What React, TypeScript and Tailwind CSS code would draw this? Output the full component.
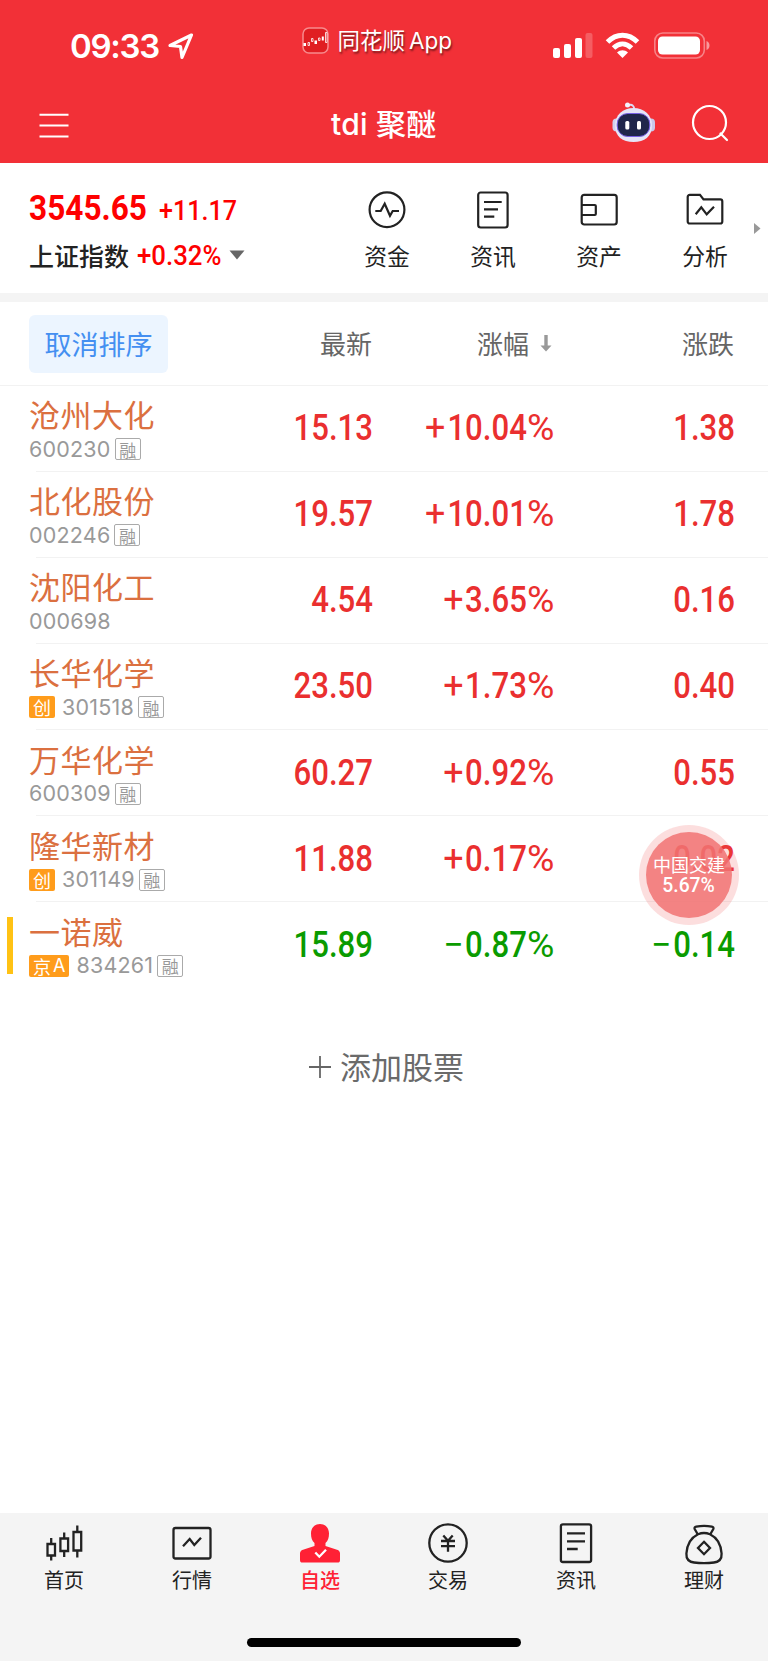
import React from 'react';

interface Stock {
  name: string;
  code: string;
  board?: string;
  margin?: boolean;
  price: string;
  percent: string;
  change: string;
  marked?: boolean;
}

const STOCKS: Stock[] = [
  { name: '沧州大化', code: '600230', margin: true, price: '15.13', percent: '+10.04', change: '1.38' },
  { name: '北化股份', code: '002246', margin: true, price: '19.57', percent: '+10.01', change: '1.78' },
  { name: '沈阳化工', code: '000698', price: '4.54', percent: '+3.65', change: '0.16' },
  { name: '长华化学', code: '301518', board: '创', margin: true, price: '23.50', percent: '+1.73', change: '0.40' },
  { name: '万华化学', code: '600309', margin: true, price: '60.27', percent: '+0.92', change: '0.55' },
  { name: '隆华新材', code: '301149', board: '创', margin: true, price: '11.88', percent: '+0.17', change: '0.02' },
  { name: '一诺威', code: '834261', board: '京A', margin: true, price: '15.89', percent: '−0.87', change: '−0.14', marked: true },
];

const SHORTCUTS = [
  {
    label: '资金',
    icon: <><circle cx="20" cy="19.7" r="17.4" /><path d="M8.3 21h5.4l4-7.3L23 25.7l2.7-4.7H32" /></>,
  },
  {
    label: '资讯',
    icon: <><rect x="5.2" y="2.5" width="29.4" height="35" rx="2.5" /><path d="M11 12h17.7M11 19.3h14M11 26.7h10.3" /></>,
  },
  {
    label: '资产',
    icon: <><rect x="2.7" y="4.9" width="35" height="29.6" rx="2.5" /><path d="M2.7 15h13.1a1 1 0 0 1 1 1v8a1 1 0 0 1-1 1H2.7" /></>,
  },
  {
    label: '分析',
    icon: <><path d="M4.7 4.9H15l3.5 4.5h16.8a2 2 0 0 1 2 2v20.1a2 2 0 0 1-2 2H4.7a2 2 0 0 1-2-2V6.9a2 2 0 0 1 2-2z" /><path d="M10.7 24.3l5.6-7 5.4 7 7.3-7.6" /></>,
  },
];

const TABS = [
  {
    label: '首页',
    icon: (
      <path d="M7.5 26H15v11.5H7.500zM11.200 20v6M11.200 37.500v5M20.400 20.500h7.700v12.500h-7.700zM24.200 14.500v6M24.200 33v6M33.500 14h7.700v18.500h-7.700zM37.300 7.500V14M37.300 32.500v7" />
    ),
  },
  {
    label: '行情',
    icon: <><rect x="5.5" y="10" width="37" height="30.5" rx="2" /><path d="M15 28.300l6.700-7.300 4.600 6 6.700-7.300" /></>,
  },
  {
    label: '自选',
    active: true,
    icon: (
      <>
        <path
          d="M24 6c5.500 0 9 4 9 9.500 0 4-1 7.500-3.500 9.500v3l11.500 3.700c2 .700 3 1.800 3 3.800V42c0 1.800-.800 2.600-2.500 2.600h-35C4.800 44.600 4 43.800 4 42v-6.500c0-2 1-3.100 3-3.800L18.500 28v-3C16 23 15 19.500 15 15.500 15 10 18.500 6 24 6z"
          fill="currentColor"
          stroke="none"
        />
        <path d="M19.300 34.500l4 4.200 6.700-7" stroke="#fff" />
      </>
    ),
  },
  {
    label: '交易',
    icon: <><circle cx="24" cy="25" r="18.7" /><path d="M19.300 17.500l4.700 5.200 4.700-5.200M17 23h14M17 28.200h14M24 22.700v11" /></>,
  },
  {
    label: '资讯',
    icon: <><rect x="8.9" y="6.3" width="30.2" height="37.7" rx="2" /><path d="M15 15.300h18M15 23.300h18M15 31h10.700" /></>,
  },
  {
    label: '理财',
    icon: (
      <>
        <path d="M17.700 16.200l-3-5.200c-.500-1.300.100-2 1.500-2.300 5.200-1 10.600-1 15.600 0 1.400.300 2 1 1.500 2.300l-3 5.200" />
        <path d="M18 16.300c4-1.700 8-1.700 12 0 6.500 3.200 11 10 11.600 19.200.300 5.500-2.600 8.400-7.600 9-6.500.800-13.500.800-20 0-5-.600-7.900-3.500-7.600-9C7 26.300 11.500 19.500 18 16.300z" />
        <path d="M24 23.800l6 6.200-6 6.200-6-6.200z" />
      </>
    ),
  },
];

const StatusBar = () => (
  <div className="flex h-[84px] items-start pl-[70px]">
    <div className="mt-[26px] w-[92px] whitespace-nowrap font-['Inter'] text-[33px] font-semibold leading-[40px] tracking-[-1.3px]">09:33</div>
    <svg className="ml-[5px] mt-[32px] h-[28px] w-[28px]" viewBox="0 0 28 28" fill="none" stroke="currentColor" strokeWidth="3.2" strokeLinejoin="round">
      <path d="M24.5 3L3 13.5l10.5 1L15 25.5z" />
    </svg>
    <svg className="ml-[107px] mt-[27px] h-[27px] w-[27px]" viewBox="0 0 27 27" fill="none">
      <rect x="1" y="1" width="25" height="25" rx="6" fill="#e01e22" stroke="#f78a8d" strokeWidth="1.5" />
      <path d="M1.5 16H4v3H1.500zM12.500 13.500H15v3.500h-2.500zM19.800 9.500h2v4h-2z" fill="#fff" />
      <path d="M6 15.500h1.500v3H6zM9.500 11.500H11v3H9.500zM16.500 11H18v2.500h-1.500zM23.500 5.500H25v10h-1.500z" stroke="#fff" strokeWidth=".8" />
    </svg>
    <div className="ml-[8.5px] mt-[26px] w-[118px] whitespace-nowrap font-['Inter','Noto_Sans_CJK_SC',sans-serif] text-[22.5px] leading-[30px] [text-shadow:1px_2px_2px_rgba(0,0,0,.5)]">
      同花顺<span className="ml-[4px]">App</span>
    </div>
    <svg className="ml-[97.5px] mt-[32px] h-[27px] w-[158px]" viewBox="0 0 158 27" fill="currentColor">
      <rect x="0" y="16" width="7" height="10" rx="2" />
      <rect x="11" y="12" width="7" height="14" rx="2" />
      <rect x="22" y="6" width="7" height="20" rx="2" />
      <rect x="32.5" y="1" width="7" height="25" rx="2" opacity=".22" />
      <g fill="none" stroke="currentColor" strokeWidth="5">
        <path d="M54.5 10c9-9 21-9 30 0" />
        <path d="M60.5 16c5.500-5.300 12.500-5.300 18 0" />
      </g>
      <path d="M64 20.500c3.500-3 7.500-3 11 0L69.500 26z" />
      <rect x="101.8" y="1" width="49.5" height="25" rx="8" fill="none" stroke="currentColor" strokeWidth="1.6" opacity=".4" />
      <rect x="105" y="4.500" width="42" height="18" rx="4.500" />
      <path d="M153.500 9c4 1.500 4 7.500 0 9z" opacity=".5" />
    </svg>
  </div>
);

const Robot = () => (
  <svg className="h-[42px] w-[45px]" viewBox="0 0 45 42" fill="none">
    <path d="M16 4.5c4-2 6.500.5 6 4" stroke="#dcdcf5" strokeWidth="1.8" />
    <circle cx="15.5" cy="4" r="2.5" fill="#f3f2fd" />
    <rect x=".5" y="17.5" width="8" height="13" rx="4" fill="#d2d1ee" />
    <rect x="35" y="17.5" width="8" height="13" rx="4" fill="#c9c8ea" />
    <path d="M21.5 7C32 7 40 13.500 40 24.500S32.500 41 21.500 41 3 35.500 3 24.500 11 7 21.500 7z" fill="#e6e5f8" />
    <rect x="5.2" y="12.5" width="32.6" height="23" rx="10.5" fill="#20264b" stroke="#7860e6" strokeWidth="1" />
    <rect x="13.3" y="20" width="4" height="8.5" rx="1.5" fill="#fff" />
    <rect x="25" y="20" width="4" height="8.5" rx="1.5" fill="#fff" />
  </svg>
);

const TitleBar = () => (
  <div className="flex h-[79px] items-start pl-[39px]">
    <svg className="mt-[29px] h-[26px] w-[30px]" viewBox="0 0 30 26" stroke="currentColor" strokeWidth="2">
      <path d="M.5 1.8h29M.5 12.6h29M.5 23.4h29" />
    </svg>
    <h1 className="ml-[262px] mt-[20px] w-[120px] whitespace-nowrap font-['Inter','Noto_Sans_CJK_SC',sans-serif] text-[30px] font-medium leading-[40px] tracking-[.25px]">tdi 聚醚</h1>
    <div className="ml-[161px] mt-[17px]"><Robot /></div>
    <svg className="ml-[34px] mt-[20px] h-[38px] w-[38px]" viewBox="0 0 38 38" fill="none" stroke="currentColor" strokeWidth="2.2">
      <circle cx="18.5" cy="18.5" r="16.5" />
      <path d="M29.5 29.5l6.5 6.5" strokeLinecap="round" />
    </svg>
  </div>
);

const IndexPanel = () => (
  <section className="flex h-[130px] pl-[29px]">
    <div className="w-[305px] pt-[25px] text-[#fe0000]">
      <div className="flex h-[40px] items-baseline font-['Roboto']">
        <span className="w-[130px] origin-left scale-x-[.89] text-[35.5px] font-bold leading-[40px]">3545.65</span>
        <span className="origin-left scale-x-[.93] text-[27px] font-medium leading-[40px]">+11.17</span>
      </div>
      <div className="mt-[7px] flex h-[40px] items-center">
        <span className="w-[108px] font-['Noto_Sans_CJK_SC',sans-serif] text-[25px] font-medium leading-[36px] text-[#222]">上证指数</span>
        <span className="w-[91.5px] origin-left scale-x-[.955] pt-px font-['Roboto'] text-[27px] font-medium leading-[36px]">+0.32%</span>
        <svg className="h-[10px] w-[16px]" viewBox="0 0 16 10" fill="#666"><path d="M.5.5h15L8 9.500z" /></svg>
      </div>
    </div>
    <div className="flex">
      {SHORTCUTS.map(item => (
        <div key={item.label} className="flex w-[106px] flex-col items-center pt-[27px]">
          <svg className="h-[40px] w-[40px] text-[#222]" viewBox="0 0 40 40" fill="none" stroke="currentColor" strokeWidth="2.2">
            {item.icon}
          </svg>
          <span className="mt-[10.5px] text-[22.8px] leading-[30px] text-[#222]">{item.label}</span>
        </div>
      ))}
    </div>
    <svg className="ml-[-4px] mt-[60px] h-[11px] w-[7px] shrink-0" viewBox="0 0 7 11" fill="#999"><path d="M0 0l6.500 5.500L0 11z" /></svg>
  </section>
);

const TableHead = () => (
  <div className="flex h-[83.5px] items-center border-b border-[#f2f2f2] pl-[29px] text-[26px] leading-[36px] text-[#666]">
    <div className="mt-px flex h-[58px] w-[139px] items-center justify-center rounded-md bg-[#ecf5ff] text-[27px] text-[#448ff1]">取消排序</div>
    <div className="w-[204px] text-right">最新</div>
    <div className="flex w-[180px] items-center justify-end">
      涨幅
      <svg className="ml-[11px] h-[17px] w-[12px]" viewBox="0 0 12 17" fill="#999"><path d="M4.3 0h3.400v10.500h3.800L6 16.500.500 10.500h3.800z" /></svg>
    </div>
    <div className="w-[182px] text-right">涨跌</div>
  </div>
);

// Tall narrow figures with a slightly wider sign and percent mark
const Figure = ({ value, percent }: { value: string; percent?: boolean }) => {
  const signed = /^[+−]/.test(value);
  return (
    <div className="w-[181px] origin-right scale-x-[.865] whitespace-nowrap text-right">
      {signed && <span className="mr-[2px] inline-block origin-right scale-x-[1.15] font-normal">{value[0]}</span>}
      {signed ? value.slice(1) : value}
      {percent && <span className="ml-[5px] inline-block origin-right scale-x-[1.2] font-normal">%</span>}
    </div>
  );
};

const StockRow = ({ stock, last }: { stock: Stock; last: boolean }) => {
  const color = stock.percent.startsWith('+') ? 'text-[#ea2f2f]' : 'text-[#0a9b00]';
  return (
    <div className="flex h-[86.17px]">
      <div className="w-[36px] shrink-0 pl-[7px] pt-[14.5px]">
        {stock.marked && <div className="h-[57.5px] w-[6px] bg-[#ffc214]" />}
      </div>
      <div className={`flex flex-1 ${last ? '' : 'border-b border-[#f2f2f2]'}`}>
        <div className="-ml-[7px] w-[163px]">
          <div className="mt-[10.5px] h-[36px] whitespace-nowrap text-[31px] leading-[36px] tracking-[.5px] text-[#db7040]">{stock.name}</div>
          <div className="mt-[5.5px] flex h-[23px] items-center">
            {stock.board && (
              <span className="mr-[7px] flex h-[22px] min-w-[26px] items-center justify-center rounded-[2px] bg-[#ff9c1b] px-[4px] text-[18px] leading-none text-white">
                {stock.board[0]}
                {stock.board[1] && <span className="ml-[2px] font-['Inter']">{stock.board[1]}</span>}
              </span>
            )}
            <span className="font-['Inter'] text-[21.5px] leading-[23px] tracking-[.2px] text-[#999]">{stock.code}</span>
            {stock.margin && (
              <span className="ml-[4px] flex h-[22px] w-[26px] items-center justify-center rounded-[2px] border border-[#aaa] text-[17px] leading-none text-[#999]">融</span>
            )}
          </div>
        </div>
        <div className={`flex flex-1 pt-[20.5px] font-['Roboto'] text-[36px] font-medium leading-[44px] ${color}`}>
          <Figure value={stock.price} />
          <Figure value={stock.percent} percent />
          <Figure value={stock.change} />
        </div>
      </div>
    </div>
  );
};

const TabBar = () => (
  <nav className="h-[148px] bg-[#f4f4f4]">
    <div className="flex pt-[5px]">
      {TABS.map((tab, i) => (
        <div key={i} className={`flex w-[128px] flex-col items-center ${tab.active ? 'font-medium text-[#ff2135]' : 'text-[#222]'}`}>
          <svg className="h-[48px] w-[48px]" viewBox="0 0 48 48" fill="none" stroke="currentColor" strokeWidth="2.3">
            {tab.icon}
          </svg>
          <span className="text-[20px] leading-[28px]">{tab.label}</span>
        </div>
      ))}
    </div>
    <div className="mx-auto mt-[44px] h-[9px] w-[274px] rounded-full bg-black" />
  </nav>
);

export default function App() {
  return (
    <div className="relative flex h-[1662px] w-[768px] flex-col overflow-hidden bg-white font-['Noto_Sans_CJK_SC',sans-serif]">
      <header className="h-[163px] bg-[#f23037] text-white">
        <StatusBar />
        <TitleBar />
      </header>
      <IndexPanel />
      <div className="h-[9px] bg-[#f4f4f4]" />
      <TableHead />
      <div>
        {STOCKS.map((stock, i) => (
          <StockRow key={stock.code} stock={stock} last={i === STOCKS.length - 1} />
        ))}
      </div>
      <div className="mt-[56px] flex h-[44px] items-center justify-center text-[31px] text-[#6a6a6a]">
        <svg className="ml-[5px] mr-[9px] h-[22px] w-[22px]" viewBox="0 0 22 22" stroke="#666" strokeWidth="1.8"><path d="M11 0v22M0 11h22" /></svg>
        添加股票
      </div>
      <div className="flex-1" />
      <TabBar />
      <div className="h-px" />

      {/* Floating quote bubble */}
      <div className="absolute left-[639px] top-[825px] flex h-[100px] w-[100px] items-center justify-center rounded-full bg-[#f05a5a]/20">
        <div className="absolute h-[86px] w-[86px] rounded-full bg-[#f17373]/85" />
        <div className="relative flex flex-col items-center whitespace-nowrap text-white">
          <span className="text-[18px] leading-[21px]">中国交建</span>
          <span className="scale-x-[.92] font-['Roboto'] text-[21px] font-medium leading-[21px]">5.67%</span>
        </div>
      </div>
    </div>
  );
}
